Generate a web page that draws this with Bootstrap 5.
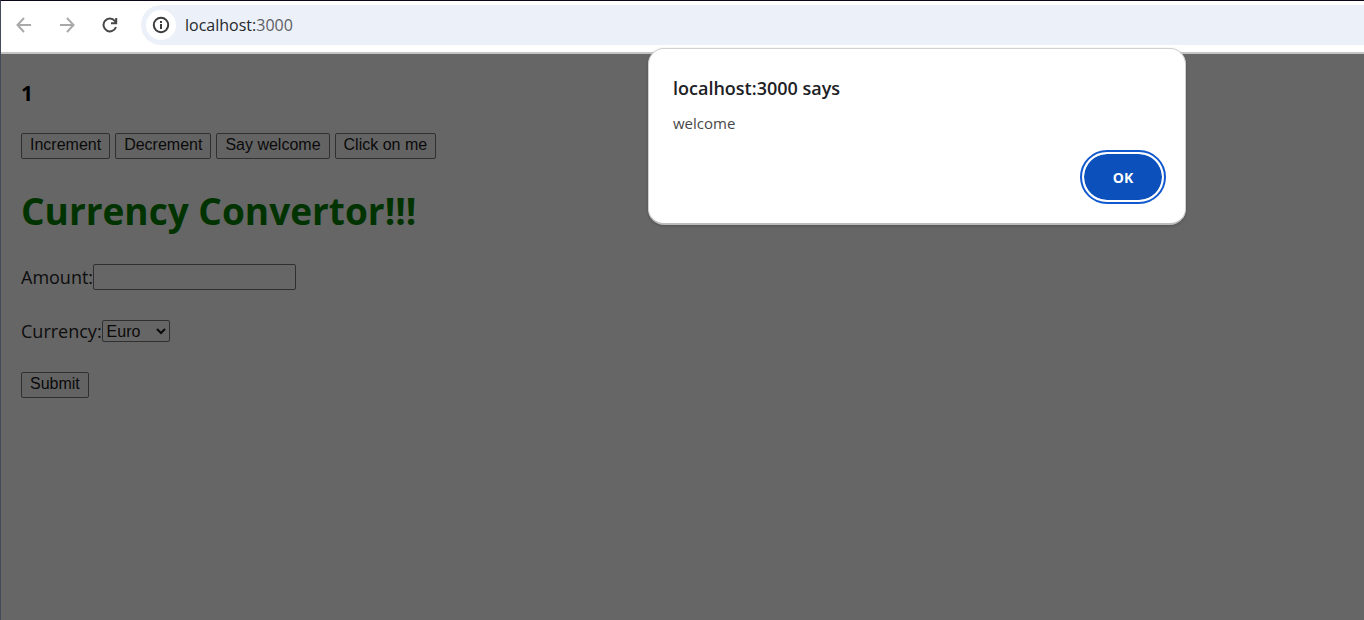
<!DOCTYPE html>
<html lang="en">
<head>
<meta charset="utf-8">
<meta name="viewport" content="width=device-width, initial-scale=1">
<title>Currency Convertor</title>
<link href="https://cdn.jsdelivr.net/npm/bootstrap@5.3.0/dist/css/bootstrap.min.css" rel="stylesheet">
<style>
  body { font-family: "Open Sans", "Noto Sans", sans-serif; background: #666; color: #0d0d0d; }
  .window { border-top: 1px solid #0c0618; border-left: 1px solid #434a58; }
  .toolbar { height: 53px; background: #fff; border-bottom: 2px solid #c4c4c4; padding: 4px 0 7px 10px; }
  .tool-btn { width: 26px; height: 26px; color: #a9a9a9; }
  .tool-btn.active-tool { color: #474747; }
  .nav-tools { gap: 17px; }
  .omnibox { background: #ecf0f9; border-radius: 20px 0 0 20px; height: 40px; padding-left: 5px; margin-left: 18px; }
  .site-info { width: 30px; height: 30px; background: #fff; color: #3c3c3c; }
  .address { font-size: 16px; color: #5c5f63; margin-left: 9px; }
  .address span { color: #25272b; }
  .content { padding: 24px 20px; font-size: 18px; line-height: 26px; }
  .count { font-size: 21px; line-height: 30px; font-weight: 700; color: #000; margin-bottom: 25px; }
  .button-row { gap: 5px; }
  .heading { font-size: 37px; line-height: 50px; font-weight: 700; color: #030; margin: 27px 0 28px; }
  .plain-btn, .plain-field, .plain-select {
    font: 16px/20px "Liberation Sans", Arial, sans-serif; color: #0a0a0a;
    border: 1px solid #303030; border-radius: 2px; background: #636363;
  }
  .plain-btn { height: 26px; padding: 0 8px 2px; }
  .plain-field { width: 203px; height: 26px; background: #666; }
  .plain-select { width: 68px; height: 22px; padding: 0; background: #666; }
  .form-line { height: 26px; margin-bottom: 28px; }
  .alert-box { left: 648px; top: 48px; width: 538px; background: #fff; border: 1px solid #d0d0d0; border-bottom: 2px solid #bcbcbc; border-radius: 16px; padding: 26px 21px 21px 24px; box-shadow: 0 1px 3px #0003; }
  .alert-title { font-size: 18px; line-height: 26px; font-weight: 600; color: #202124; margin-bottom: 12px; }
  .alert-text { font-size: 15px; line-height: 20px; color: #474747; margin-bottom: 19px; }
  .ok-btn { width: 82px; height: 50px; border: 2px solid #fff; border-radius: 26px; background: #0b50bb; background-clip: padding-box; color: #fff; font-size: 14px; font-weight: 700; outline: 2px solid #1159ce; outline-offset: 0; }
</style>
</head>
<body>
<div class="window min-vh-100 overflow-hidden">
  <header class="toolbar d-flex align-items-center">
    <div class="nav-tools d-flex">
      <button class="tool-btn btn p-0 border-0 d-flex align-items-center justify-content-center" aria-label="Back">
        <svg width="16" height="16" viewBox="0 0 16 16" fill="none" stroke="currentColor" stroke-width="2"><path d="M15 8H2M8 1 1.500 8 8 15"/></svg>
      </button>
      <button class="tool-btn btn p-0 border-0 d-flex align-items-center justify-content-center" aria-label="Forward">
        <svg width="16" height="16" viewBox="0 0 16 16" fill="none" stroke="currentColor" stroke-width="2"><path d="M1 8h13M8 1l6.500 7L8 15"/></svg>
      </button>
      <button class="tool-btn active-tool btn p-0 border-0 d-flex align-items-center justify-content-center" aria-label="Reload">
        <svg width="16" height="16" viewBox="0 0 16 16" fill="none" stroke="currentColor" stroke-width="2"><path d="M14 10A6.400 6.400 0 1 1 12.800 3.800L14 5.500M14.200 1v5.300H9"/></svg>
      </button>
    </div>
    <div class="omnibox d-flex align-items-center flex-grow-1">
      <button class="site-info btn rounded-circle border-0 p-0 d-flex align-items-center justify-content-center" aria-label="Site information">
        <svg width="18" height="18" viewBox="0 0 18 18" fill="none" stroke="currentColor" stroke-width="2"><circle cx="9" cy="9" r="7.200"/><path d="M9 8v5M9 5v2"/></svg>
      </button>
      <div class="address" role="textbox" aria-label="Address"><span>localhost:</span>3000</div>
    </div>
  </header>

  <main class="content">
    <h3 class="count">1</h3>
    <div class="button-row d-flex flex-wrap">
      <button class="plain-btn">Increment</button>
      <button class="plain-btn">Decrement</button>
      <button class="plain-btn">Say welcome</button>
      <button class="plain-btn">Click on me</button>
    </div>
    <h1 class="heading">Currency Convertor!!!</h1>
    <form>
      <div class="form-line d-flex align-items-center">
        <label for="amount">Amount:</label><input class="plain-field" id="amount" type="text">
      </div>
      <div class="form-line d-flex align-items-center">
        <label for="currency">Currency:</label><select class="plain-select" id="currency"><option>Euro</option><option>INR</option></select>
      </div>
      <button class="plain-btn d-block" type="button">Submit</button>
    </form>
  </main>
</div>

<section class="alert-box position-absolute" role="alertdialog" aria-labelledby="alertTitle" aria-describedby="alertText">
  <h2 class="alert-title" id="alertTitle">localhost:3000 says</h2>
  <p class="alert-text" id="alertText">welcome</p>
  <div class="d-flex justify-content-end"><button class="ok-btn">OK</button></div>
</section>
<script src="https://cdn.jsdelivr.net/npm/bootstrap@5.3.0/dist/js/bootstrap.bundle.min.js"></script>
</body>
</html>
